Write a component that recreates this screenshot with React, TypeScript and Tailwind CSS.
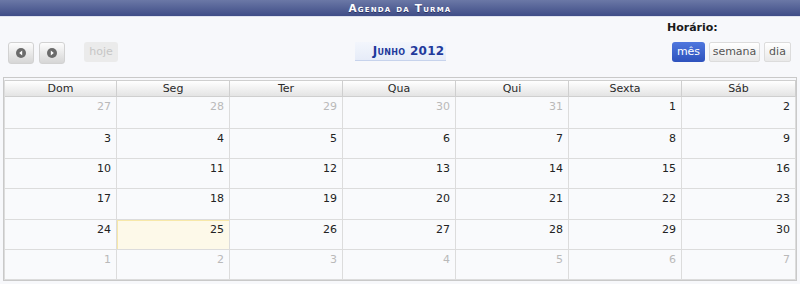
import React from "react";

const days = ["Dom", "Seg", "Ter", "Qua", "Qui", "Sexta", "Sáb"];

type Cell = { n: number; cur: boolean; today?: boolean };

const weeks: Cell[][] = [
  [
    { n: 27, cur: false },
    { n: 28, cur: false },
    { n: 29, cur: false },
    { n: 30, cur: false },
    { n: 31, cur: false },
    { n: 1, cur: true },
    { n: 2, cur: true },
  ],
  [3, 4, 5, 6, 7, 8, 9].map((n) => ({ n, cur: true })),
  [10, 11, 12, 13, 14, 15, 16].map((n) => ({ n, cur: true })),
  [17, 18, 19, 20, 21, 22, 23].map((n) => ({ n, cur: true })),
  [24, 25, 26, 27, 28, 29, 30].map((n) => ({ n, cur: true, today: n === 25 })),
  [1, 2, 3, 4, 5, 6, 7].map((n) => ({ n, cur: false })),
];

const rowH = ["h-[32px]", "h-[30px]", "h-[30px]", "h-[31px]", "h-[30px]", "h-[30px]"];

function NavIcon({ dir }: { dir: "l" | "r" }) {
  return (
    <svg width="10" height="10" viewBox="0 0 10 10">
      <circle cx="5" cy="5" r="5" fill="#6b6b6b" />
      {dir === "l" ? (
        <polygon points="6.2,2.6 3.2,5 6.2,7.4" fill="#fff" />
      ) : (
        <polygon points="3.8,2.6 6.8,5 3.8,7.4" fill="#fff" />
      )}
    </svg>
  );
}

export default function App() {
  return (
    <div
      className="w-[800px] h-[284px] bg-[#f7f8fb] overflow-hidden text-[11px] text-[#222]"
      style={{ fontFamily: '"DejaVu Sans", Verdana, sans-serif' }}
    >
      <div className="h-[16px] bg-gradient-to-b from-[#6b78a6] to-[#404d87] flex items-center justify-center">
        <span className="text-white font-bold text-[10.5px] tracking-[1.2px] leading-none [font-variant:small-caps] [text-shadow:0_1px_0_#2a3366]">
          Agenda da Turma
        </span>
      </div>
      <div className="h-px bg-[#dfe3ee]" />

      <div className="grid grid-cols-[1fr_auto_1fr] h-[60px] px-[8px]">
        <div className="flex items-start pt-[25px]">
          <button className="w-[26px] h-[22px] rounded-[3px] border border-[#d2d2d2] bg-gradient-to-b from-[#fdfdfd] to-[#d6d6d6] flex items-center justify-center">
            <NavIcon dir="l" />
          </button>
          <button className="ml-[5px] w-[26px] h-[22px] rounded-[3px] border border-[#d2d2d2] bg-gradient-to-b from-[#fdfdfd] to-[#d6d6d6] flex items-center justify-center">
            <NavIcon dir="r" />
          </button>
          <div className="ml-[19px] w-[34px] h-[20px] rounded-[3px] bg-[#ebebeb] text-[#c6c6c6] flex items-center justify-center">
            hoje
          </div>
        </div>
        <div className="pt-[25px]">
          <div className="w-[91px] h-[19px] bg-gradient-to-b from-[#f3f6fc] to-[#e6ecf8] border-b border-[#c7d3ec] flex items-center justify-end pr-[1px]">
            <span className="text-[#1f3a9c] font-bold text-[12px] leading-none tracking-[0.3px] [font-variant:small-caps]">
              Junho 2012
            </span>
          </div>
        </div>
        <div className="flex justify-end pr-[1px]">
          <div className="w-[124px] flex flex-col">
            <div className="pt-[4px] font-bold leading-[13px] text-[#1a1a1a]">Horário:</div>
            <div className="flex mt-[8px] ml-[5px]">
              <div className="w-[33px] h-[20px] rounded-[3px] bg-gradient-to-b from-[#4f77de] to-[#2e52bd] text-white flex items-center justify-center">
                mês
              </div>
              <div className="ml-[4px] w-[51px] h-[20px] rounded-[2px] border border-[#dcdcdc] bg-gradient-to-b from-[#ffffff] to-[#e9e9e9] text-[#555] flex items-center justify-center">
                semana
              </div>
              <div className="ml-[4px] w-[27px] h-[20px] rounded-[2px] border border-[#dcdcdc] bg-gradient-to-b from-[#ffffff] to-[#e9e9e9] text-[#555] flex items-center justify-center">
                dia
              </div>
            </div>
          </div>
        </div>
      </div>

      <div className="mx-[3px] border border-[#c9c9c9] pt-[2px]">
        <div className="border-l border-[#dcdcdc]">
          <div className="grid grid-cols-[112px_113px_113px_113px_113px_113px_114px] h-[17px] border-t border-b border-[#cfcfcf] bg-gradient-to-b from-[#ffffff] to-[#e4e4e4]">
            {days.map((d) => (
              <div
                key={d}
                className="border-r border-[#cfcfcf] flex items-center justify-center text-[#2a2a2a] leading-none"
              >
                {d}
              </div>
            ))}
          </div>
          {weeks.map((w, i) => (
            <div
              key={i}
              className={`grid grid-cols-[112px_113px_113px_113px_113px_113px_114px] ${rowH[i]}`}
            >
              {w.map((c, j) => (
                <div
                  key={j}
                  className={
                    c.today
                      ? "border-r border-b border-[#dcdcdc] bg-[#fdf9e9] shadow-[inset_1px_1px_0_#f7e8a9] text-right pr-[5px] pt-[3px] leading-[13px] text-[#222]"
                      : c.cur
                      ? "border-r border-b border-[#dcdcdc] bg-[#f9fafc] text-right pr-[5px] pt-[3px] leading-[13px] text-[#222]"
                      : "border-r border-b border-[#dcdcdc] bg-[#f9fafc] text-right pr-[5px] pt-[3px] leading-[13px] text-[#b9b9b9]"
                  }
                >
                  {c.n}
                </div>
              ))}
            </div>
          ))}
        </div>
      </div>
    </div>
  );
}
